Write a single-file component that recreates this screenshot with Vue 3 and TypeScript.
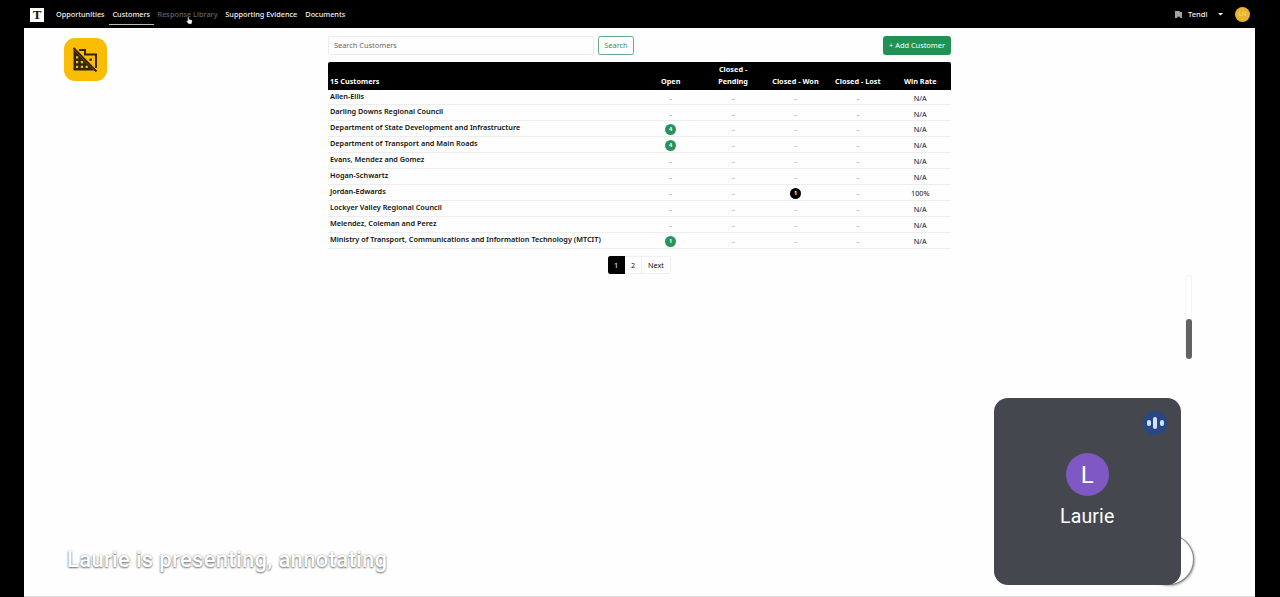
<script setup lang="ts">
interface NavItem {
  label: string
  width: number
  state?: 'active' | 'hover'
}

interface Customer {
  name: string
  open?: number
  pending?: number
  won?: number
  lost?: number
  rate: string
}

const navItems: NavItem[] = [
  { label: 'Opportunities', width: 57 },
  { label: 'Customers', width: 45, state: 'active' },
  { label: 'Response Library', width: 67.5, state: 'hover' },
  { label: 'Supporting Evidence', width: 80 },
  { label: 'Documents', width: 48 },
]

const columns = ['Open', 'Closed - Pending', 'Closed - Won', 'Closed - Lost', 'Win Rate']
const counts = ['open', 'pending', 'won', 'lost'] as const

const customers: Customer[] = [
  { name: 'Allen-Ellis', rate: 'N/A' },
  { name: 'Darling Downs Regional Council', rate: 'N/A' },
  { name: 'Department of State Development and Infrastructure', open: 4, rate: 'N/A' },
  { name: 'Department of Transport and Main Roads', open: 4, rate: 'N/A' },
  { name: 'Evans, Mendez and Gomez', rate: 'N/A' },
  { name: 'Hogan-Schwartz', rate: 'N/A' },
  { name: 'Jordan-Edwards', won: 1, rate: '100%' },
  { name: 'Lockyer Valley Regional Council', rate: 'N/A' },
  { name: 'Melendez, Coleman and Perez', rate: 'N/A' },
  { name: 'Ministry of Transport, Communications and Information Technology (MTCIT)', open: 1, rate: 'N/A' },
]
</script>

<template>
  <div class="stage">
    <div class="shared">
      <header class="topbar">
        <div class="logo">T</div>
        <nav class="nav">
          <a v-for="item in navItems" :key="item.label" class="nav-item" :class="item.state" :style="{ width: item.width + 'px' }">{{ item.label }}</a>
        </nav>
        <div class="account">
          <svg class="org" viewBox="0 0 8 8"><path d="M0 0H5V1H8V8H5.5V6H2.5V8H0Z" fill="#a4a4a4" /></svg>
          <span class="org-name">Tendl</span>
          <svg class="caret" viewBox="0 0 4 2"><path d="M0 0H4L2 2Z" fill="#fff" /></svg>
          <span class="user">LN</span>
        </div>
      </header>

      <main class="content">
        <div class="tools">
          <div class="search-field">Search Customers</div>
          <button class="search-button">Search</button>
          <button class="add-button">+ Add Customer</button>
        </div>
        <div class="table">
          <div class="row head">
            <div class="name">15 Customers</div>
            <div v-for="column in columns" :key="column" class="cell">{{ column }}</div>
          </div>
          <div v-for="customer in customers" :key="customer.name" class="row">
            <div class="name">{{ customer.name }}</div>
            <div v-for="key in counts" :key="key" class="cell">
              <span v-if="customer[key]" class="badge" :class="key">{{ customer[key] }}</span>
              <span v-else class="dash">-</span>
            </div>
            <div class="cell rate">{{ customer.rate }}</div>
          </div>
        </div>
        <div class="pager">
          <span class="page current">1</span>
          <span class="page">2</span>
          <span class="page next">Next</span>
        </div>
      </main>
    </div>

    <svg class="pointer" viewBox="0 0 12 14">
      <path d="M3 1.2Q4.2.4 5 1.8V5L9.5 6Q11 6.5 10.5 8.5L9.5 13H4.5L1 8.5Q.8 7 3 8Z" fill="#fff" stroke="#222" stroke-width=".7" />
    </svg>

    <div class="domain-off">
      <svg viewBox="0 0 26 26">
        <path d="M7 3H13V7.5H24V21" fill="none" stroke="#33270a" stroke-width="2" />
        <path d="M1.5 2.5V23.5H22Z" fill="#33270a" />
        <path d="M4 9.2h2.2v2.2H4zM4 14h2.2v2.2H4zM4 18.8h2.2v2.2H4zM8.8 14H11v2.2H8.8zM8.8 18.8H11v2.2H8.8zM13.6 18.8h2.2v2.2h-2.2z" fill="#fbbc04" />
        <path d="M17.5 11.5h2.3v2.3h-2.3z" fill="#33270a" />
        <path d="M1.5 1L24.5 24.5" stroke="#33270a" stroke-width="2" />
      </svg>
    </div>

    <div class="scroll"><div class="thumb"></div></div>
    <div class="round-button"></div>

    <section class="tile">
      <div class="speaking"><i></i><i class="tall"></i><i></i></div>
      <div class="avatar">L</div>
      <div class="participant">Laurie</div>
    </section>
    <div class="caption">Laurie is presenting, annotating</div>
  </div>
</template>

<style>
body {
  margin: 0;
  background: #000;
}
</style>

<style scoped>
.stage {
  position: relative;
  box-sizing: border-box;
  width: 1280px;
  height: 597px;
  padding: 0 25px 0 24px;
  overflow: hidden;
  background: #000;
  font-family: "Noto Sans", "Open Sans", sans-serif;
  font-size: 7.3px;
  color: #111;
}

.shared {
  box-sizing: border-box;
  height: 597px;
  background: #fefefe;
  border-bottom: 1px solid #dedede;
}

.topbar {
  display: flex;
  align-items: center;
  box-sizing: border-box;
  height: 28px;
  padding: 1px 5px 0 6px;
  background: #000;
  color: #f2f2f2;
}

.logo {
  width: 14px;
  height: 14px;
  margin-right: 7.8px;
  background: #fff;
  color: #111;
  font: bold 13px/14px "Liberation Serif", serif;
  text-align: center;
}

.nav {
  display: flex;
  height: 24px;
  margin-top: -1px;
}

.nav-item {
  box-sizing: border-box;
  height: 23px;
  border-bottom: 1px solid transparent;
  line-height: 25px;
  font-weight: 500;
  text-align: center;
  white-space: nowrap;
}

.nav-item.active {
  border-color: #bbb;
}

.nav-item.hover {
  color: #666;
}

.account {
  display: flex;
  align-items: center;
  margin-left: auto;
}

.org {
  width: 7.5px;
  height: 7.5px;
}

.org-name {
  width: 20px;
  margin-left: 6px;
  font-weight: 500;
  font-size: 7.6px;
  line-height: 14px;
  margin-top: -1px;
}

.caret {
  width: 5px;
  height: 2.5px;
  margin-left: 9.5px;
}

.user {
  width: 15px;
  height: 15px;
  margin-left: 12.5px;
  border-radius: 50%;
  background: #e8b62c;
  color: #f7dc8d;
  font-size: 6px;
  line-height: 15px;
  text-align: center;
}

.content {
  width: 623px;
  margin-left: 304px;
  padding-top: 8px;
}

.tools {
  display: flex;
  height: 18px;
}

.search-field,
.search-button,
.add-button {
  box-sizing: border-box;
  height: 18.5px;
  padding: 0;
  border: 1px solid #ebebeb;
  border-radius: 2.5px;
  font: 7.4px/17.5px "Noto Sans", sans-serif;
}

.search-field {
  width: 266px;
  padding-left: 5px;
  color: #666;
}

.search-button {
  width: 36px;
  margin-left: 4px;
  border-color: #66aa85;
  background: #fff;
  color: #389263;
}

.add-button {
  width: 68px;
  margin-left: auto;
  border-color: #209253;
  background: #209253;
  color: #fff;
}

.table {
  margin-top: 8px;
  border-radius: 2px 2px 0 0;
  overflow: hidden;
}

.row {
  display: grid;
  grid-template-columns: 311.5px repeat(5, 62.4px);
  box-sizing: border-box;
  height: 15.9px;
  border-bottom: 1px solid #ededed;
}

.name {
  padding-left: 2px;
  font-weight: 600;
  line-height: 13.4px;
  white-space: nowrap;
}

.cell {
  display: flex;
  align-items: center;
  justify-content: center;
  padding-top: 1.2px;
  text-align: center;
}

.dash {
  color: #777;
}

.row.head {
  height: 27.6px;
  padding-bottom: 2px;
  border: 0;
  align-items: end;
  background: #000;
  color: #fff;
  font-weight: 700;
}

.head .name {
  font-weight: 700;
  line-height: 13px;
}

.head .cell {
  padding: 0 12px;
  line-height: 11.7px;
}

.head .cell:nth-child(n + 4) {
  padding: 0;
}

.badge {
  width: 11px;
  height: 11px;
  margin-top: 1px;
  border-radius: 50%;
  background: #29935a;
  color: #fff;
  font-size: 5.5px;
  font-weight: 700;
  line-height: 11px;
}

.badge.won {
  background: #000;
}

.pager {
  display: flex;
  width: 63px;
  height: 18.5px;
  margin: 7.4px 0 0 280px;
}

.page {
  box-sizing: border-box;
  width: 17px;
  border: 1px solid #efefef;
  border-left: 0;
  line-height: 17px;
  text-align: center;
}

.page.current {
  border-color: #000;
  border-radius: 2.5px 0 0 2.5px;
  background: #000;
  color: #fff;
}

.page.next {
  width: 29px;
  border-radius: 0 2.5px 2.5px 0;
}

.pointer {
  position: absolute;
  left: 186px;
  top: 16px;
  width: 7px;
  height: 9px;
}

.domain-off {
  position: absolute;
  left: 64px;
  top: 38px;
  width: 43px;
  height: 43px;
  border-radius: 11px;
  background: #fbbc04;
}

.domain-off svg {
  display: block;
  width: 26px;
  height: 26px;
  margin: 9px 0 0 8px;
}

.scroll {
  position: absolute;
  left: 1185px;
  top: 275px;
  box-sizing: border-box;
  width: 7px;
  height: 84px;
  padding-top: 44px;
  border: 1px solid #f4f4f4;
  border-bottom: 0;
  border-radius: 4px;
}

.thumb {
  width: 6px;
  height: 40px;
  margin: -1px 0 0 -0.5px;
  border-radius: 3px;
  background: #626262;
}

.round-button {
  position: absolute;
  left: 1144px;
  top: 535px;
  width: 49px;
  height: 49px;
  border-radius: 50%;
  background: #fff;
  box-shadow: 0 0 0 1px #888, 1px 1px 3px #555;
}

.tile {
  position: absolute;
  left: 994px;
  top: 398px;
  display: flex;
  flex-direction: column;
  align-items: center;
  width: 186.5px;
  height: 187px;
  border-radius: 14px;
  background: #45474f;
  color: #fff;
  font-family: Roboto, sans-serif;
}

.speaking {
  position: absolute;
  right: 13.5px;
  top: 13px;
  display: flex;
  align-items: center;
  justify-content: center;
  gap: 2.5px;
  width: 24px;
  height: 24px;
  border-radius: 50%;
  background: #294785;
}

.speaking i {
  width: 4px;
  height: 6px;
  border-radius: 2px;
  background: #d3e3fd;
}

.speaking .tall {
  height: 12px;
}

.avatar {
  width: 43.5px;
  height: 43.5px;
  margin-top: 54.5px;
  border-radius: 50%;
  background: #8058c4;
  font-size: 24px;
  line-height: 45px;
  text-align: center;
}

.participant {
  margin-top: 9px;
  font-size: 19.5px;
  line-height: 23px;
  letter-spacing: 0.15px;
}

.caption {
  position: absolute;
  left: 67px;
  top: 546px;
  color: #fff;
  font: 500 22px/28px Roboto, sans-serif;
  letter-spacing: 0.33px;
  text-shadow: 0 1px 2px rgba(0, 0, 0, 0.5), 0 0 2px rgba(0, 0, 0, 0.35);
  white-space: nowrap;
}
</style>
